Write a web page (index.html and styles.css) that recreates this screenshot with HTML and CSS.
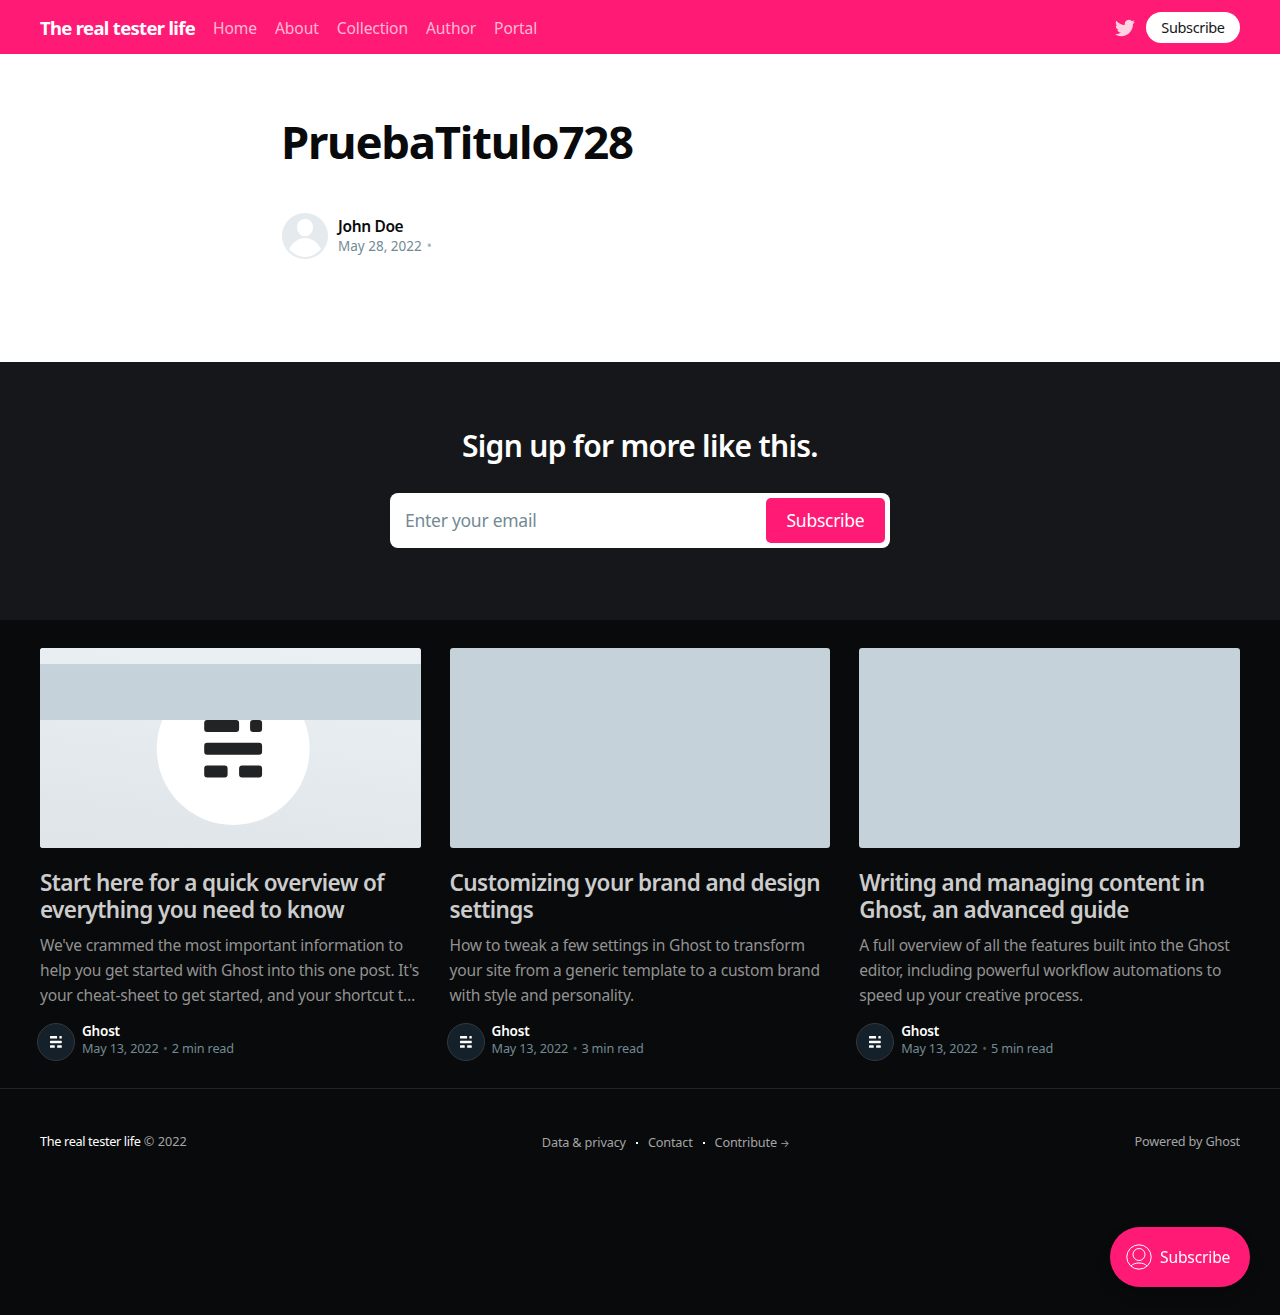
FILE: index.html
```html
<!DOCTYPE html>
<html lang="en">
<head>
<meta charset="utf-8">
<title>PruebaTitulo728</title>
<link rel="stylesheet" href="styles.css">
</head>
<body>
<svg class="defs" width="0" height="0" aria-hidden="true">
  <symbol id="ghost-mark" viewBox="0 0 59 58">
    <path d="M3 0h29a3 3 0 0 1 3 3v6a3 3 0 0 1-3 3H3a3 3 0 0 1-3-3V3a3 3 0 0 1 3-3zM49 0h6a3 3 0 0 1 3 3v6a3 3 0 0 1-3 3h-6a3 3 0 0 1-3-3V3a3 3 0 0 1 3-3zM3 22.700h52a3 3 0 0 1 3 3v6a3 3 0 0 1-3 3H3a3 3 0 0 1-3-3v-6a3 3 0 0 1 3-3zM3 45.400h17.500a3 3 0 0 1 3 3v6a3 3 0 0 1-3 3H3a3 3 0 0 1-3-3v-6a3 3 0 0 1 3-3zM38 45.400h17a3 3 0 0 1 3 3v6a3 3 0 0 1-3 3H38a3 3 0 0 1-3-3v-6a3 3 0 0 1 3-3z"/>
  </symbol>
</svg>
<header class="site-header">
  <a class="site-logo">The real tester life</a>
  <nav class="site-nav"><a>Home</a><a>About</a><a>Collection</a><a>Author</a><a>Portal</a></nav>
  <svg class="twitter" viewBox="0 0 24 24"><path d="M23.954 4.569a10 10 0 0 1-2.825.775 4.958 4.958 0 0 0 2.163-2.723c-.951.555-2.005.959-3.127 1.184a4.92 4.92 0 0 0-8.384 4.482C7.691 8.094 4.066 6.130 1.640 3.161a4.822 4.822 0 0 0-.666 2.475c0 1.710.870 3.213 2.188 4.096a4.904 4.904 0 0 1-2.228-.616v.061a4.923 4.923 0 0 0 3.946 4.827 4.996 4.996 0 0 1-2.212.085 4.937 4.937 0 0 0 4.604 3.417 9.868 9.868 0 0 1-6.102 2.105c-.39 0-.779-.023-1.170-.067a13.995 13.995 0 0 0 7.557 2.209c9.054 0 13.999-7.496 13.999-13.986 0-.209 0-.42-.015-.63a9.936 9.936 0 0 0 2.460-2.548z"/></svg>
  <a class="header-subscribe">Subscribe</a>
</header>
<main class="article">
  <h1 class="article-title">PruebaTitulo728</h1>
  <div class="byline">
    <svg class="avatar" viewBox="0 0 46 46"><circle cx="23" cy="23" r="23" fill="#e4eaee"/><ellipse cx="23" cy="14.500" rx="8" ry="8.700" fill="#fff"/><path d="M7 36c4-7 9-11 16-11s12 4 16 11c-4 5-10 8-16 8S11 41 7 36z" fill="#fff"/></svg>
    <div>
      <div class="byline-name">John Doe</div>
      <div class="byline-date">May 28, 2022 <span class="dot">•</span></div>
    </div>
  </div>
</main>
<section class="signup">
  <h2 class="signup-title">Sign up for more like this.</h2>
  <div class="signup-form"><span class="signup-input">Enter your email</span><a class="signup-button">Subscribe</a></div>
</section>
<section class="feed">
  <article class="card">
    <div class="card-image card-image-partial">
      <svg class="cover" viewBox="0 0 381 200"><defs><linearGradient id="cover-bg" x1="0.350" y1="1" x2="0.650" y2="0"><stop offset="0" stop-color="#e0e5e9"/><stop offset="1" stop-color="#ebf0f4"/></linearGradient></defs><rect width="381" height="200" fill="url(#cover-bg)"/><circle cx="193.300" cy="100.500" r="76.500" fill="#fff"/><rect y="16" width="381" height="56" fill="#c5d2d9"/><use href="#ghost-mark" x="164.200" y="72" width="59" height="58" fill="#222325"/></svg>
    </div>
    <h2 class="card-title">Start here for a quick overview of<br>everything you need to know</h2>
    <p class="card-excerpt">We've crammed the most important information to<br>help you get started with Ghost into this one post. It's<br>your cheat-sheet to get started, and your shortcut t…</p>
    <footer class="card-meta"><span class="author-badge"><svg viewBox="0 0 59 58"><use href="#ghost-mark"/></svg></span><div class="card-byline"><div class="card-author">Ghost</div><div class="card-date">May 13, 2022 <span class="dot">•</span> 2 min read</div></div></footer>
  </article>
  <article class="card">
    <div class="card-image"></div>
    <h2 class="card-title">Customizing your brand and design<br>settings</h2>
    <p class="card-excerpt">How to tweak a few settings in Ghost to transform<br>your site from a generic template to a custom brand<br>with style and personality.</p>
    <footer class="card-meta"><span class="author-badge"><svg viewBox="0 0 59 58"><use href="#ghost-mark"/></svg></span><div class="card-byline"><div class="card-author">Ghost</div><div class="card-date">May 13, 2022 <span class="dot">•</span> 3 min read</div></div></footer>
  </article>
  <article class="card">
    <div class="card-image"></div>
    <h2 class="card-title">Writing and managing content in<br>Ghost, an advanced guide</h2>
    <p class="card-excerpt">A full overview of all the features built into the Ghost<br>editor, including powerful workflow automations to<br>speed up your creative process.</p>
    <footer class="card-meta"><span class="author-badge"><svg viewBox="0 0 59 58"><use href="#ghost-mark"/></svg></span><div class="card-byline"><div class="card-author">Ghost</div><div class="card-date">May 13, 2022 <span class="dot">•</span> 5 min read</div></div></footer>
  </article>
</section>
<footer class="site-footer">
  <div class="copyright"><a>The real tester life</a> © 2022</div>
  <nav class="footer-nav"><a>Data &amp; privacy</a><a>Contact</a><a>Contribute <span class="arrow">→</span></a></nav>
  <div class="powered">Powered by Ghost</div>
</footer>
<a class="portal"><svg class="portal-icon" viewBox="0 0 26 26"><circle cx="13" cy="13" r="12.200"/><circle cx="13" cy="10.500" r="6"/><path d="M5 22c3-4 13-4 16 0"/></svg><span>Subscribe</span></a>
</body>
</html>
```
FILE: styles.css
```css
* { box-sizing: border-box; }
body { margin: 0; min-height: 1315px; background: #090a0b; color: #fff; font-family: "Noto Sans", sans-serif; font-size: 15.6px; }
h1, h2, p { margin: 0; }
a { white-space: nowrap; }
.defs { position: absolute; }
.site-header { display: flex; align-items: center; height: 54px; padding: 0 40px; background: #ff1a75; }
.site-logo { margin-right: 18px; font-size: 18.5px; font-weight: 700; letter-spacing: -0.68px; }
.site-nav { display: flex; gap: 18px; padding-top: 2px; color: rgba(255, 255, 255, .7); letter-spacing: -0.11px; }
.twitter { width: 20px; height: 20px; margin: 2px 11px 0 auto; fill: #fff; opacity: .8; }
.header-subscribe { width: 94px; height: 31px; border-radius: 16px; background: #fff; color: #15171a; font-size: 14.5px; letter-spacing: -0.35px; line-height: 31px; text-align: center; }
.article { height: 308px; padding: 60px 281px 0; background: #fff; color: #090a0b; }
.article-title { font-size: 45.5px; font-weight: 700; letter-spacing: -1.25px; line-height: 55px; }
.byline { display: flex; align-items: center; gap: 10px; margin: 44px 0 0 1px; }
.avatar { width: 46px; height: 46px; }
.byline-name { font-size: 15.5px; font-weight: 600; letter-spacing: -0.35px; line-height: 20px; }
.byline-date { color: #738a94; font-size: 13.5px; line-height: 20px; }
.dot { opacity: .6; margin: 0 1px 0 1.5px; }
.signup { display: flex; flex-direction: column; align-items: center; height: 258px; padding-top: 65px; background: #15171a; }
.signup-title { font-size: 30px; font-weight: 600; letter-spacing: -0.7px; line-height: 38px; }
.signup-form { display: flex; align-items: center; justify-content: space-between; width: 500px; height: 55px; margin-top: 28px; padding: 5px 5px 5px 15px; border-radius: 8px; background: #fff; font-size: 17.5px; letter-spacing: -0.27px; }
.signup-input { padding-bottom: 1px; color: #738a94; }
.signup-button { width: 119px; height: 45px; border-radius: 5px; background: #ff1a75; line-height: 45px; text-align: center; }
.feed { display: grid; grid-template-columns: repeat(3, 1fr); gap: 28.800px; height: 468px; padding: 28px 40px 0; }
.card { min-width: 0; white-space: nowrap; }
.card-image { height: 200px; overflow: hidden; border-radius: 3px; background: #c5d2d9; }
.cover { display: block; width: 100%; height: 100%; }
.card-title { margin-top: 21px; color: #ccc; font-size: 22.5px; font-weight: 600; letter-spacing: -0.59px; line-height: 27px; }
.card-excerpt { margin-top: 10px; color: #929292; font-size: 15.6px; letter-spacing: -0.24px; line-height: 25px; }
.card-meta { display: flex; align-items: center; gap: 7px; margin: 14px 0 0 -3px; }
.author-badge { display: flex; align-items: center; justify-content: center; width: 38px; height: 38px; border: 1px solid #34383c; border-radius: 50%; background: #15212a; }
.author-badge svg { width: 12px; height: 12px; fill: #fff; }
.card-byline { padding-bottom: 4px; }
.card-author { font-size: 13.5px; font-weight: 600; letter-spacing: -0.2px; line-height: 18px; }
.card-date { color: #738a94; font-size: 12.7px; letter-spacing: -0.18px; line-height: 17px; }
.site-footer { display: flex; justify-content: space-between; align-items: flex-start; padding: 42px 40px 0; border-top: 1px solid #212325; color: #a4a5a6; font-size: 12.7px; letter-spacing: -0.17px; line-height: 20px; }
.copyright { letter-spacing: 0; }
.copyright a { color: #fff; letter-spacing: -0.34px; }
.footer-nav { display: flex; padding: 1px 0 0 10px; }
.footer-nav a + a::before { content: ""; display: inline-block; width: 2px; height: 2px; margin: -2px 10px 0; vertical-align: middle; background: #fff; }
.arrow { font-family: Inter, sans-serif; font-size: 10px; }
.powered { text-align: right; }
.portal { position: fixed; right: 30px; bottom: 28px; display: flex; align-items: center; gap: 8px; width: 140px; height: 60px; padding-left: 16px; border-radius: 30px; background: #ff1a75; letter-spacing: -0.15px; box-shadow: 0 8px 16px -2px rgba(0, 0, 0, .25); }
.portal-icon { width: 26px; height: 26px; fill: none; stroke: #fff; stroke-width: 1; }
```
